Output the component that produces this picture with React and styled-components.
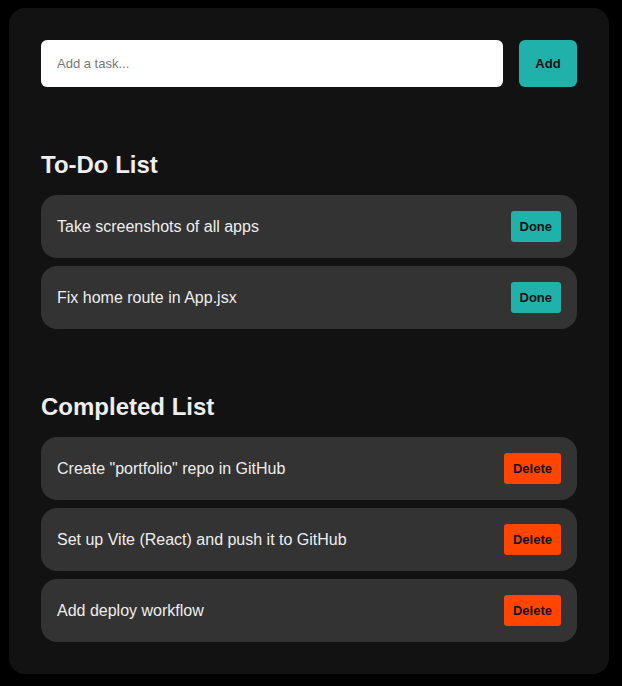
import React from "react";
import styled, { createGlobalStyle } from "styled-components";

const Global = createGlobalStyle`
  html, body { margin: 0; padding: 0; background: #000; }
  body { padding: 8px 13px 0 9px; font-family: "Liberation Sans", Arial, sans-serif; }
  * { box-sizing: border-box; }
`;

const Card = styled.div`
  width: 600px;
  background: #121212;
  border-radius: 16px;
  padding: 32px 32px 32px;
  color: #eee;
`;

const InputRow = styled.div`
  display: flex;
  gap: 16px;
  height: 47px;
`;

const TaskInput = styled.input`
  flex: 1;
  min-width: 0;
  border: none;
  border-radius: 6px;
  background: #fff;
  padding: 0 16px;
  font-family: "Liberation Sans", Arial, sans-serif;
  font-size: 13px;
  color: #111;
  outline: none;
  &::placeholder { color: #777; }
`;

const ActionButton = styled.button`
  border: none;
  background: ${(p) => (p.$variant === "delete" ? "#ff4500" : "#20b2aa")};
  color: #111;
  font-family: "Liberation Sans", Arial, sans-serif;
  font-weight: bold;
  font-size: 13px;
  border-radius: ${(p) => (p.$big ? "6px" : "3px")};
  padding: ${(p) => (p.$big ? "0" : "0 9px")};
  width: ${(p) => (p.$big ? "58px" : "auto")};
  flex-shrink: 0;
  height: ${(p) => (p.$big ? "47px" : "31px")};
  cursor: pointer;
`;

const Heading = styled.h2`
  margin: 64px 0 16px;
  font-size: 24px;
  font-weight: bold;
  color: #eee;
  line-height: 28px;
`;

const List = styled.div`
  display: flex;
  flex-direction: column;
  gap: 8px;
`;

const Item = styled.div`
  display: flex;
  align-items: center;
  justify-content: space-between;
  background: #333;
  border-radius: 16px;
  padding: 16px;
  height: 63px;
  font-size: 16px;
  color: #eee;
`;

const todo = ["Take screenshots of all apps", "Fix home route in App.jsx"];
const done = [
  'Create "portfolio" repo in GitHub',
  "Set up Vite (React) and push it to GitHub",
  "Add deploy workflow",
];

export default function App() {
  return (
    <>
      <Global />
      <Card>
        <InputRow>
          <TaskInput placeholder="Add a task..." />
          <ActionButton $big>Add</ActionButton>
        </InputRow>
        <Heading>To-Do List</Heading>
        <List>
          {todo.map((t) => (
            <Item key={t}>
              <span>{t}</span>
              <ActionButton>Done</ActionButton>
            </Item>
          ))}
        </List>
        <Heading>Completed List</Heading>
        <List>
          {done.map((t) => (
            <Item key={t}>
              <span>{t}</span>
              <ActionButton $variant="delete">Delete</ActionButton>
            </Item>
          ))}
        </List>
      </Card>
    </>
  );
}
